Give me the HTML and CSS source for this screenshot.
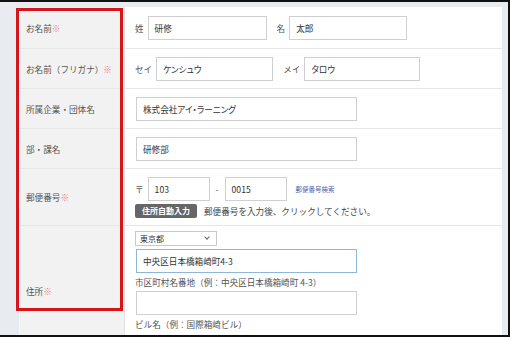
FILE: index.html
```html
<!DOCTYPE html>
<html lang="ja">
<head>
  <meta charset="UTF-8">
  <title>お申し込みフォーム</title>
  <link rel="stylesheet" href="styles.css">
</head>
<body>

<div id="frame">
  <div class="form">
    <div class="row r1">
      <div class="label">お名前<span class="req">※</span></div>
      <div class="field">
        <span class="pre">姓</span><span class="input w119">研修</span>
        <span class="pre gap">名</span><span class="input w118">太郎</span>
      </div>
    </div>
    <div class="row r2">
      <div class="label">お名前（フリガナ）<span class="req">※</span></div>
      <div class="field">
        <span class="pre">セイ</span><span class="input w117">ケンシュウ</span>
        <span class="pre gap">メイ</span><span class="input w116">タロウ</span>
      </div>
    </div>
    <div class="row r3">
      <div class="label">所属企業・団体名</div>
      <div class="field">
        <span class="input wide">株式会社アイ・ラーニング</span>
      </div>
    </div>
    <div class="row r4">
      <div class="label">部・課名</div>
      <div class="field">
        <span class="input wide">研修部</span>
      </div>
    </div>
    <div class="row r5">
      <div class="label">郵便番号<span class="req">※</span></div>
      <div class="field stack">
        <div class="zip">
          <span class="pre">〒</span><span class="input w62">103</span>
          <span class="dash">-</span><span class="input w62">0015</span>
          <a class="zip-link" href="#">郵便番号検索</a>
        </div>
        <div class="auto">
          <span class="btn">住所自動入力</span>
          <span class="note">郵便番号を入力後、クリックしてください。</span>
        </div>
      </div>
    </div>
    <div class="row r6">
      <div class="label">住所<span class="req">※</span></div>
      <div class="field stack">
        <div class="select">東京都<span class="chev"></span></div>
        <span class="input wide focus">中央区日本橋箱崎町4-3</span>
        <div class="hint">市区町村名番地（例：中央区日本橋箱崎町 4-3）</div>
        <span class="input wide"></span>
        <div class="hint">ビル名（例：国際箱崎ビル）</div>
      </div>
    </div>
  </div>
  <div class="mark"></div>
</div>

</body>
</html>
```

FILE: styles.css
```css
body{
  margin: 0;
  font-family: "Noto Sans CJK JP", "Noto Sans", sans-serif;
  color: #4a4a4a;
}
#frame{
  position: relative;
  box-sizing: border-box;
  width: 510px;
  height: 337px;
  padding: 5px 6px 0 19px;
  background: #e8ecf1;
  border-top: 2px solid #111;
  border-right: 2px solid #111;
  border-bottom: 2px solid #111;
  overflow: hidden;
}
.form{
  background: #fff;
  border-left: 1px solid #f7f7f7;
}
.row{
  display: grid;
  grid-template-columns: 105px 1fr;
  border-bottom: 1px solid #e6e6e6;
}
.r1{ height: 41px; }
.r2{ height: 39px; }
.r3{ height: 39px; }
.r4{ height: 39px; }
.r5{ height: 56px; }
.r6{ height: 130px; }
.label{
  display: flex;
  align-items: center;
  padding-left: 6px;
  background: #f2f2f2;
  border-right: 1px solid #e2e2e2;
  font-size: 8.6px;
  color: #555;
}
.req{
  color: #ef7a7a;
}
.field{
  display: flex;
  align-items: center;
  padding-left: 10px;
  font-size: 8.6px;
}
.stack{
  flex-direction: column;
  align-items: flex-start;
  justify-content: flex-start;
}
.r5 .stack{ padding-top: 8px; }
.r6 .stack{ padding-top: 5px; }
.pre{
  margin-right: 4px;
  color: #555;
}
.gap{
  margin-left: 10px;
}
.input{
  box-sizing: border-box;
  display: inline-flex;
  align-items: center;
  height: 24px;
  padding-left: 6px;
  border: 1px solid #cfcfcf;
  background: #fff;
  color: #333;
  font-size: 8.6px;
  font-feature-settings: "palt";
}
.w119{ width: 119px; }
.w118{ width: 118px; }
.w117{ width: 117px; }
.w116{ width: 116px; }
.w62{ width: 62px; }
.wide{ width: 221px; margin-left: 1px; }
.focus{
  border-color: #8db6d8;
}
.zip{
  display: flex;
  align-items: center;
}
.dash{
  margin: 0 6px;
}
.zip-link{
  margin-left: 9px;
  font-size: 6.5px;
  color: #4d62a8;
  text-decoration: none;
}
.auto{
  display: flex;
  align-items: center;
  margin-top: 3px;
}
.btn{
  box-sizing: border-box;
  width: 62px;
  height: 14px;
  line-height: 14px;
  text-align: center;
  background: #666;
  border-radius: 2px;
  color: #fff;
  font-weight: bold;
  font-size: 8px;
}
.note{
  margin-left: 7px;
  color: #444;
}
.select{
  box-sizing: border-box;
  position: relative;
  width: 82px;
  height: 15px;
  padding-left: 4px;
  border: 1px solid #c8c8c8;
  font-size: 8px;
  line-height: 13px;
  color: #333;
}
.chev{
  position: absolute;
  right: 7px;
  top: 3px;
  width: 3px;
  height: 3px;
  border-right: 1px solid #666;
  border-bottom: 1px solid #666;
  transform: rotate(45deg);
}
.r6 .select + .input{
  margin-top: 3px;
}
.hint{
  margin-top: 3px;
  color: #555;
}
.hint + .input{
  margin-top: 3px;
}
.mark{
  position: absolute;
  left: 16px;
  top: 6px;
  width: 107px;
  height: 303px;
  box-sizing: border-box;
  border: 3px solid #d6141c;
}
```
